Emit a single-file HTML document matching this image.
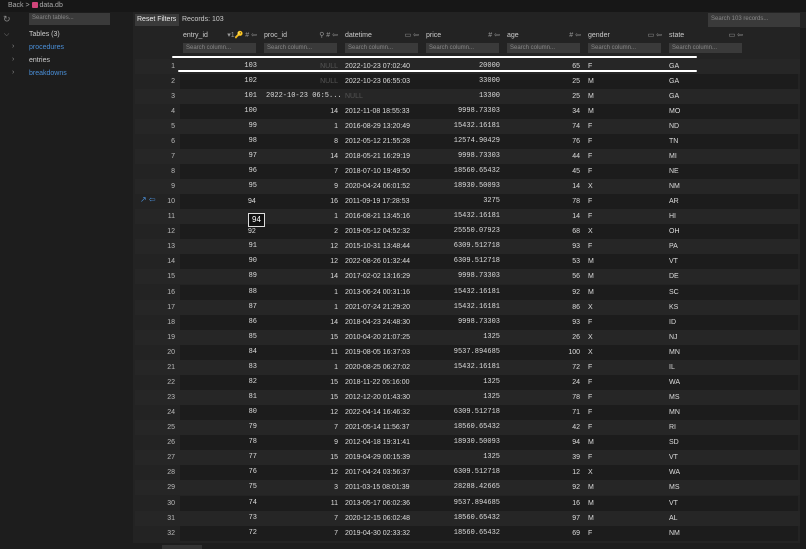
<!DOCTYPE html>
<html><head><meta charset="utf-8"><style>
*{margin:0;padding:0;box-sizing:border-box}
body{width:806px;height:549px;overflow:hidden;background:#232323;font-family:"Liberation Sans",sans-serif;color:#ddd;font-size:7px;position:relative}
.a{position:absolute;white-space:nowrap}
.top{left:0;top:0;width:806px;height:12px;background:#171717;color:#aaa;font-size:7px;padding:2px 0 0 8px}
.side{left:0;top:12px;width:133px;height:537px;background:#1d1d1d}
.inp{background:#3a3a3a;color:#888;font-size:6px;padding:2px 3px;height:10px}
.mono{font-family:"Liberation Mono",monospace;font-size:7px}
.row{position:absolute;left:135px;width:665px;height:15px}
.row.o{background:#262626}
.row.d .bg{position:absolute;left:45px;top:0;width:618px;height:15px;background:#1c1c1c}
.c{position:absolute;top:3px;line-height:9px}
.hd{top:32px;color:#ccc;font-size:7px}
.ic{color:#999;font-size:7px}
</style></head><body>
<div class="a top">Back &gt; <span style="display:inline-block;width:6px;height:6px;background:#d0457a;border-radius:1px;vertical-align:-1px"></span> data.db</div>
<div class="a side"></div>
<div class="a" style="left:3px;top:14px;color:#888;font-size:9px">↻</div>
<div class="a inp" style="left:29px;top:13px;width:81px;height:12px">Search tables...</div>
<div class="a" style="left:4px;top:31px;color:#888">⌵</div>
<div class="a" style="left:29px;top:31px;color:#ccc">Tables (3)</div>
<div class="a" style="left:12px;top:43px;color:#888">›</div><div class="a" style="left:29px;top:44px;color:#4a8fd8">procedures</div>
<div class="a" style="left:12px;top:56px;color:#888">›</div><div class="a" style="left:29px;top:57px;color:#ccc">entries</div>
<div class="a" style="left:12px;top:69px;color:#888">›</div><div class="a" style="left:29px;top:70px;color:#4a8fd8">breakdowns</div>
<div class="a" style="left:135px;top:14px;width:44px;height:12px;background:#3a3a3a;color:#eee;font-size:7px;padding:2px 2px">Reset Filters</div>
<div class="a" style="left:182px;top:16px;color:#ccc">Records: 103</div>
<div class="a inp" style="left:708px;top:13px;width:92px;height:14px;padding-top:3px">Search 103 records...</div>
<div class="a" style="left:800px;top:28px;width:6px;height:521px;background:#1a1a1a"></div>
<div id="hdr"></div>
<div id="rows"></div>
<div class="a" style="left:172px;top:56px;width:525px;height:2px;background:#fff;border-radius:1px"></div>
<div class="a" style="left:178px;top:70px;width:519px;height:2px;background:#fff;border-radius:1px"></div>
<div class="a" style="left:140px;top:195px;color:#4a8fd8;font-size:8px">↗ ⇦</div>
<div class="a" style="left:248px;top:213px;width:17px;height:14px;background:#111;border:1px solid #ddd;color:#fff;font-size:8px;text-align:center;line-height:12px">94</div>
<div class="a" style="left:133px;top:543px;width:667px;height:6px;background:#1d1d1d"></div>
<div class="a" style="left:162px;top:545px;width:40px;height:4px;background:#333"></div>
<script>
var cols=[["entry_id",183,"▾1🔑 # ⇦"],["proc_id",264,"⚲ # ⇦"],["datetime",345,"▭ ⇦"],["price",426,"# ⇦"],["age",507,"# ⇦"],["gender",588,"▭ ⇦"],["state",669,"▭ ⇦"]];
var h="";cols.forEach(function(c){h+='<div class="a hd" style="left:'+c[1]+'px">'+c[0]+'</div><div class="a ic" style="left:'+(c[1]+40)+'px;top:31px;width:34px;text-align:right">'+c[2]+'</div><div class="a inp" style="left:'+c[1]+'px;top:43px;width:73px">Search column...</div>';});
document.getElementById("hdr").innerHTML=h;
var d="103|N|2022-10-23 07:02:40|20000|65|F|GA;102|N|2022-10-23 06:55:03|33000|25|M|GA;101|*|N|13300|25|M|GA;100|14|2012-11-08 18:55:33|9998.73303|34|M|MO;99|1|2016-08-29 13:20:49|15432.16181|74|F|ND;98|8|2012-05-12 21:55:28|12574.90429|76|F|TN;97|14|2018-05-21 16:29:19|9998.73303|44|F|MI;96|7|2018-07-10 19:49:50|18560.65432|45|F|NE;95|9|2020-04-24 06:01:52|18930.50093|14|X|NM;94|16|2011-09-19 17:28:53|3275|78|F|AR;|1|2016-08-21 13:45:16|15432.16181|14|F|HI;92|2|2019-05-12 04:52:32|25550.07923|68|X|OH;91|12|2015-10-31 13:48:44|6309.512718|93|F|PA;90|12|2022-08-26 01:32:44|6309.512718|53|M|VT;89|14|2017-02-02 13:16:29|9998.73303|56|M|DE;88|1|2013-06-24 00:31:16|15432.16181|92|M|SC;87|1|2021-07-24 21:29:20|15432.16181|86|X|KS;86|14|2018-04-23 24:48:30|9998.73303|93|F|ID;85|15|2010-04-20 21:07:25|1325|26|X|NJ;84|11|2019-08-05 16:37:03|9537.894685|100|X|MN;83|1|2020-08-25 06:27:02|15432.16181|72|F|IL;82|15|2018-11-22 05:16:00|1325|24|F|WA;81|15|2012-12-20 01:43:30|1325|78|F|MS;80|12|2022-04-14 16:46:32|6309.512718|71|F|MN;79|7|2021-05-14 11:56:37|18560.65432|42|F|RI;78|9|2012-04-18 19:31:41|18930.50093|94|M|SD;77|15|2019-04-29 00:15:39|1325|39|F|VT;76|12|2017-04-24 03:56:37|6309.512718|12|X|WA;75|3|2011-03-15 08:01:39|28288.42665|92|M|MS;74|11|2013-05-17 06:02:36|9537.894685|16|M|VT;73|7|2020-12-15 06:02:48|18560.65432|97|M|AL;72|7|2019-04-30 02:33:32|18560.65432|69|F|NM".split(";");
var r="";d.forEach(function(s,i){var f=s.split("|");var top=58.5+i*15.07;
var o='<div class="row'+(i%2?' d':' o')+'" style="top:'+top+'px"><div class="bg"></div>';
o+='<div class="c" style="left:0;width:40px;text-align:right;color:#bbb">'+(i+1)+'</div>';
var e=f[0];if(i==9||i==10||i==11)o+='<div class="c" style="left:113px;color:#ddd">'+(i==10?'':e)+'</div>';else o+='<div class="c mono" style="left:48px;width:74px;text-align:right">'+e+'</div>';
if(f[1]=="N")o+='<div class="c" style="left:129px;width:74px;text-align:right;color:#555">NULL</div>';
else if(f[1]=="*")o+='<div class="c mono" style="left:131px">2022-10-23 06:5...</div>';
else o+='<div class="c" style="left:129px;width:74px;text-align:right">'+f[1]+'</div>';
if(f[2]=="N")o+='<div class="c" style="left:210px;color:#555">NULL</div>';else o+='<div class="c" style="left:210px">'+f[2]+'</div>';
o+='<div class="c mono" style="left:291px;width:74px;text-align:right">'+f[3]+'</div>';
o+='<div class="c" style="left:372px;width:73px;text-align:right">'+f[4]+'</div>';
o+='<div class="c" style="left:453px">'+f[5]+'</div><div class="c" style="left:534px">'+f[6]+'</div></div>';r+=o;});
document.getElementById("rows").innerHTML=r;
</script>
</body></html>
